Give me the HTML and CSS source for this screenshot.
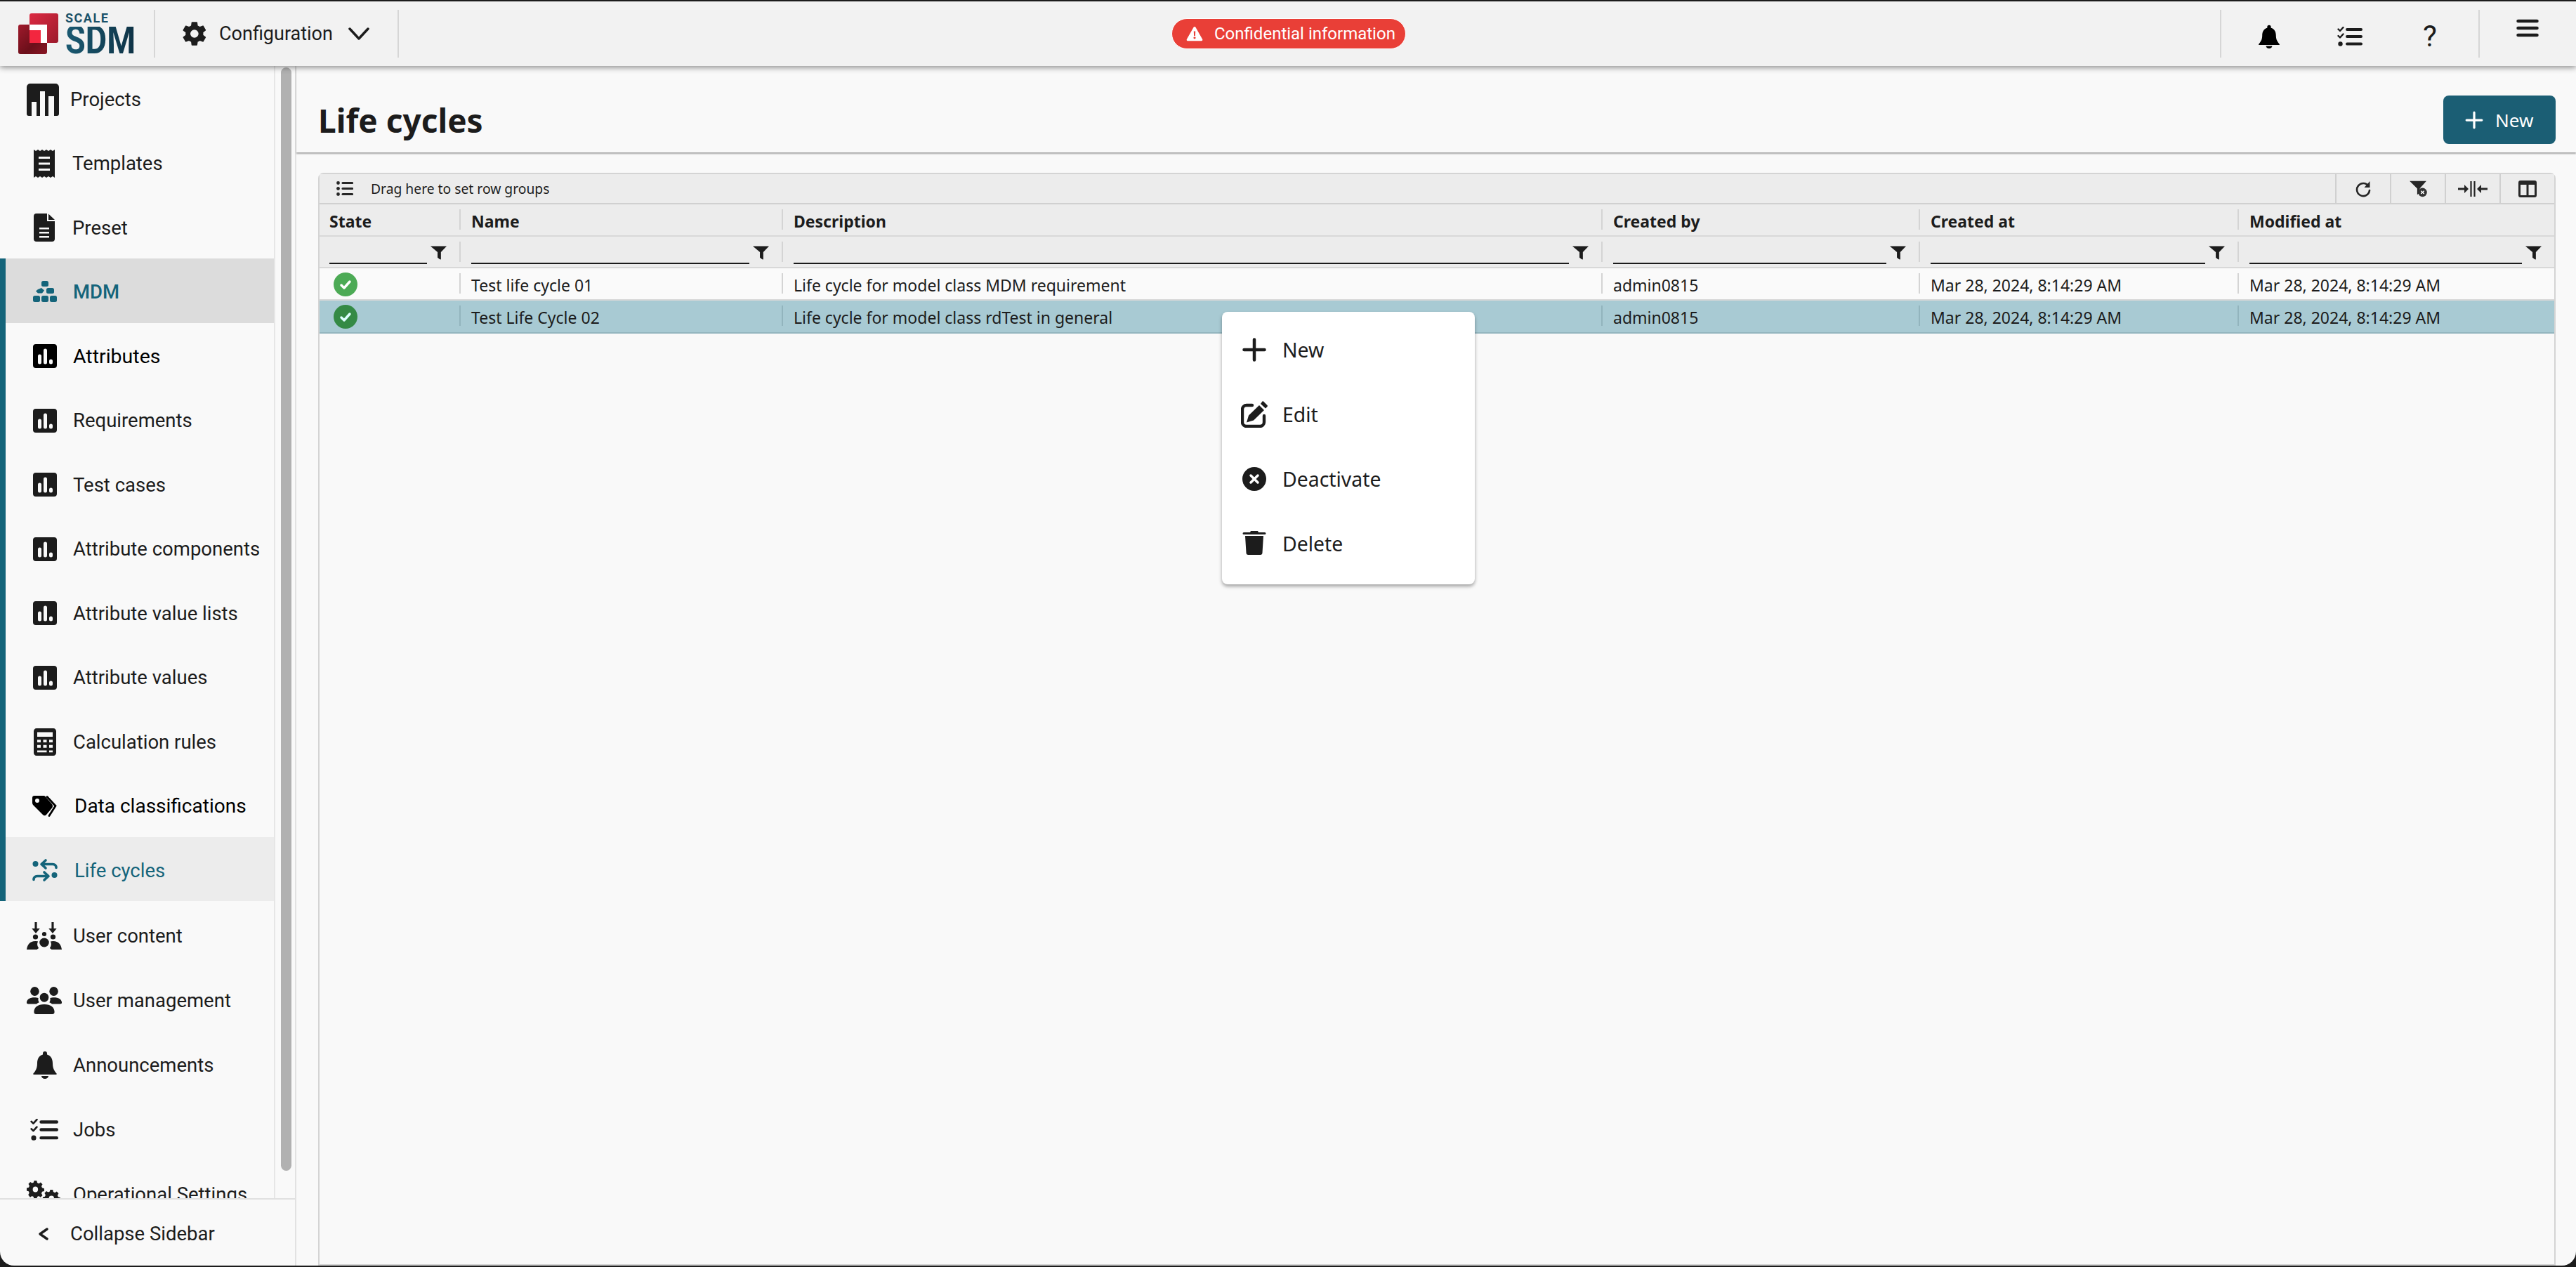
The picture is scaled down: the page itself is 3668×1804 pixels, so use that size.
FILE: index.html
```html
<!DOCTYPE html>
<html lang="en">
<head>
    <meta charset="UTF-8">
    <meta name="viewport" content="width=device-width, initial-scale=1.0">
    <title>Life cycles</title>
    <link rel="stylesheet" href="styles.css">
</head>
<body>
    <svg class="defs" width="0" height="0">
        <defs>
            <linearGradient id="logoTop" x1="0" y1="0" x2="1" y2="1">
                <stop offset="0" stop-color="#dc2a42"/>
                <stop offset="1" stop-color="#9c1a2c"/>
            </linearGradient>
            <linearGradient id="logoLow" x1="0" y1="0" x2="1" y2="1">
                <stop offset="0" stop-color="#a01a2c"/>
                <stop offset="0.6" stop-color="#6c0f1a"/>
                <stop offset="1" stop-color="#8a1624"/>
            </linearGradient>
            <symbol id="i-chart" viewBox="0 0 36 36">
                <path fill-rule="evenodd" d="M5 1h26a4 4 0 0 1 4 4v26a4 4 0 0 1-4 4H5a4 4 0 0 1-4-4V5a4 4 0 0 1 4-4zM8 18v9a2 2 0 0 0 5 0v-9a2 2 0 0 0-5 0zM16 10v17a2 2 0 0 0 5 0V10a2 2 0 0 0-5 0zM24 25v2a2.500 2.500 0 0 0 5 0v-2a2.500 2.500 0 0 0-5 0z"/>
            </symbol>
            <symbol id="i-bell" viewBox="0 0 36 40" preserveAspectRatio="none">
                <path d="M18 1a3 3 0 0 0-3 3v1.500C9.500 7 7 12 7 18c0 6-1.500 10-5.500 14.500-.6.800-.2 1.500.8 1.500h31.400c1 0 1.400-.7.800-1.500C30.500 28 29 24 29 18c0-6-2.500-11-8-12.500V4a3 3 0 0 0-3-3zM13 36h10c0 2.200-2.200 4-5 4s-5-1.800-5-4z"/>
            </symbol>
            <symbol id="i-tasks" viewBox="0 0 36 28" preserveAspectRatio="none">
                <path fill="none" stroke="currentColor" stroke-width="2.400" stroke-linecap="round" stroke-linejoin="round" d="M1.500 3.500l2.500 2.500 4.500-5M1.500 13l2.500 2.500 4.500-5"/>
                <circle cx="4.500" cy="24.500" r="3.200" fill="currentColor"/>
                <path fill="none" stroke="currentColor" stroke-width="4" stroke-linecap="round" d="M14 4h20M14 14h20M14 24.500h20"/>
            </symbol>
            <symbol id="i-filter" viewBox="0 0 24 20">
                <path d="M0 0h24l-8.500 9v10c0 1-1 1.200-2 .5l-3-2.500V9z"/>
            </symbol>
        </defs>
    </svg>

    <div class="app">
        <header class="topbar">
            <div class="logo">
                <svg class="logo-mark" viewBox="0 0 57 58">
                    <rect x="16" y="0" width="41" height="42" rx="3" fill="url(#logoTop)"/>
                    <rect x="0" y="16" width="41" height="42" rx="3" fill="url(#logoLow)"/>
                    <rect x="16" y="16" width="25" height="26" fill="#fff"/>
                    <rect x="16" y="24" width="16" height="18" fill="#f3263f"/>
                </svg>
                <div class="logo-text">
                    <span class="logo-scale">SCALE</span>
                    <span class="logo-sdm">SDM</span>
                </div>
            </div>
            <span class="bar-sep"></span>
            <div class="module">
                <svg class="module-gear" viewBox="0 0 24 24"><path fill="currentColor" d="M19.400 13c.04-.33.06-.66.06-1s-.02-.67-.06-1l2.100-1.650a.5.5 0 0 0 .12-.64l-2-3.460a.5.5 0 0 0-.61-.22l-2.490 1a7.300 7.300 0 0 0-1.730-1l-.38-2.650A.5.5 0 0 0 13.900 2h-4a.5.5 0 0 0-.49.42L9.030 5.070c-.61.25-1.180.59-1.730 1l-2.490-1a.5.5 0 0 0-.61.22l-2 3.460a.5.5 0 0 0 .12.64L4.420 11c-.04.33-.07.66-.07 1s.03.67.07 1l-2.100 1.650a.5.5 0 0 0-.12.64l2 3.460c.12.22.39.3.61.22l2.490-1c.55.42 1.120.75 1.730 1l.38 2.650c.05.24.25.42.49.42h4c.25 0 .45-.18.49-.42l.38-2.650a7.300 7.300 0 0 0 1.730-1l2.490 1c.22.08.49 0 .61-.22l2-3.460a.5.5 0 0 0-.12-.64L19.400 13zM11.900 15.500a3.500 3.500 0 1 1 0-7 3.500 3.500 0 0 1 0 7z"/></svg>
                <span class="module-name">Configuration</span>
                <svg class="module-chevron" viewBox="0 0 32 20"><path fill="none" stroke="currentColor" stroke-width="3.500" stroke-linecap="round" stroke-linejoin="round" d="M3 3l13 14L29 3"/></svg>
            </div>
            <span class="bar-sep"></span>
            <div class="bar-center">
                <div class="confidential">
                    <svg viewBox="0 0 24 22"><path fill="#fff" fill-rule="evenodd" d="M12 1c.6 0 1.100.3 1.400.8l9.800 17.300c.5 1-.2 2.200-1.400 2.200H2.200C1 21.300.3 20.100.8 19.100L10.600 1.800c.3-.5.800-.8 1.400-.8zM10.800 7.500l.3 6.500h1.800l.3-6.500zM12 15.200a1.600 1.600 0 1 0 0 3.200 1.600 1.600 0 0 0 0-3.200z"/></svg>
                    <span>Confidential information</span>
                </div>
            </div>
            <span class="bar-sep"></span>
            <div class="bar-icons">
                <svg class="bar-bell"><use href="#i-bell"/></svg>
                <svg class="bar-tasks"><use href="#i-tasks"/></svg>
                <span class="bar-help">?</span>
            </div>
            <span class="bar-sep"></span>
            <svg class="bar-menu" viewBox="0 0 32 26"><path fill="none" stroke="currentColor" stroke-width="4.500" stroke-linecap="round" d="M2.500 3h27M2.500 13h27M2.500 23h27"/></svg>
        </header>

        <div class="body-row">
            <aside class="sidebar">
                <div class="sidebar-scroll">
                    <nav class="nav">
                        <a class="nav-item nav-first">
                            <svg class="nav-icon icon-projects" viewBox="0 0 46 46"><path fill-rule="evenodd" d="M5 0h36a5 5 0 0 1 5 5v38a3 3 0 0 1-3 3h-4V18h-8v28h-5V11h-7v35h-5V26H7v20H3a3 3 0 0 1-3-3V5a5 5 0 0 1 5-5z"/></svg>
                            <span>Projects</span>
                        </a>
                        <a class="nav-item nav-narrow">
                            <svg class="nav-icon icon-doc" viewBox="0 0 30 40"><path fill-rule="evenodd" d="M0 0l3 2 3-2 3 2 3-2 3 2 3-2 3 2 3-2 3 2 3-2v40l-3-2-3 2-3-2-3 2-3-2-3 2-3-2-3 2-3-2-3 2zM7 10v3h16v-3zM7 18.500v3h16v-3zM7 27v3h16v-3z"/></svg>
                            <span>Templates</span>
                        </a>
                        <a class="nav-item nav-narrow">
                            <svg class="nav-icon icon-doc" viewBox="0 0 30 40"><path fill-rule="evenodd" d="M4 0h15v11h11v25a4 4 0 0 1-4 4H4a4 4 0 0 1-4-4V4a4 4 0 0 1 4-4zM21 .5L30 9h-9zM8 20v2.500h14V20zM8 26v2.500h14V26zM8 32v2.500h14V32z"/></svg>
                            <span>Preset</span>
                        </a>

                        <div class="nav-group">
                            <a class="nav-item is-parent">
                                <svg class="nav-icon" viewBox="0 0 36 36"><g fill="currentColor"><rect x="13" y="2" width="10" height="8" rx="2.500"/><path d="M8 14l5-2 4 3.500-3 4H8l-3-3z"/><rect x="20" y="12" width="11" height="8" rx="2.500"/><rect x="1" y="23" width="10" height="9" rx="2.500"/><rect x="13" y="23" width="10" height="9" rx="2.500"/><rect x="25" y="23" width="10" height="9" rx="2.500"/></g></svg>
                                <span>MDM</span>
                            </a>
                            <a class="nav-item strong nav-attr"><svg class="nav-icon"><use href="#i-chart"/></svg><span>Attributes</span></a>
                            <a class="nav-item"><svg class="nav-icon"><use href="#i-chart"/></svg><span>Requirements</span></a>
                            <a class="nav-item"><svg class="nav-icon"><use href="#i-chart"/></svg><span>Test cases</span></a>
                            <a class="nav-item"><svg class="nav-icon"><use href="#i-chart"/></svg><span>Attribute components</span></a>
                            <a class="nav-item"><svg class="nav-icon"><use href="#i-chart"/></svg><span>Attribute value lists</span></a>
                            <a class="nav-item"><svg class="nav-icon"><use href="#i-chart"/></svg><span>Attribute values</span></a>
                            <a class="nav-item">
                                <svg class="nav-icon icon-calc" viewBox="2 0 32 36" preserveAspectRatio="none"><path fill-rule="evenodd" d="M6 0h24a4 4 0 0 1 4 4v28a4 4 0 0 1-4 4H6a4 4 0 0 1-4-4V4a4 4 0 0 1 4-4zM7 5v6h22V5zM7 15v3.500h5V15zM15.500 15v3.500h5V15zM24 15v3.500h5V15zM7 22v3.500h5V22zM15.500 22v3.500h5V22zM24 22v3.500h5V22zM7 29v2.500h13.500V29zM24 29v2.500h5V29z"/></svg>
                                <span>Calculation rules</span>
                            </a>
                            <a class="nav-item strong nav-class">
                                <svg class="nav-icon" viewBox="0 0 36 30"><path fill-rule="evenodd" d="M3 0h13c1 0 2 .5 2.700 1.200L28 12c1.400 1.500 1.400 4 0 5.500L20 27c-1.400 1.600-3.600 1.600-5 0L1 13C.3 12.200 0 11 0 10V3a3 3 0 0 1 3-3zM7 4a3 3 0 1 0 0 6 3 3 0 0 0 0-6z"/><path fill="none" stroke="currentColor" stroke-width="2.800" stroke-linecap="round" d="M21 1.500l12 13-9 14"/></svg>
                                <span>Data classifications</span>
                            </a>
                            <a class="nav-item is-active nav-class">
                                <svg class="nav-icon" viewBox="0 0 36 32"><g fill="currentColor"><circle cx="4.500" cy="7" r="4"/><circle cx="31.500" cy="23" r="4"/></g><path fill="none" stroke="currentColor" stroke-width="3.600" stroke-linecap="round" stroke-linejoin="round" d="M19 2l-6 5.500 6 5.500M14 7.500h15c3 0 5 2 5 5M17 19l6 5.500-6 5.500M22 24.500H7c-3 0-5 2-5 5"/></svg>
                                <span>Life cycles</span>
                            </a>
                        </div>

                        <a class="nav-item nav-wide nav-low">
                            <svg class="nav-icon" viewBox="0 0 48 39" preserveAspectRatio="none"><g fill="currentColor"><path d="M11 0h3v9h4l-5.500 7L7 9h4zM34 0h3v9h4l-5.500 7L30 9h4z"/><circle cx="12" cy="21" r="3.500"/><circle cx="36" cy="21" r="3.500"/><circle cx="24" cy="17" r="3"/><circle cx="24" cy="29" r="6.500"/><path d="M0 39c1-7 4-12 12-12 1.500 0 2.500.2 3.500.6-.5 1-1 2.400-1 4 0 2 1 4 2 5.400-1 .6-2 1.200-2.500 2zM48 39c-1-7-4-12-12-12-1.500 0-2.500.2-3.500.6.5 1 1 2.400 1 4 0 2-1 4-2 5.400 1 .6 2 1.200 2.500 2z"/></g></svg>
                            <span>User content</span>
                        </a>
                        <a class="nav-item nav-wide nav-low">
                            <svg class="nav-icon" viewBox="0 0 48 36" preserveAspectRatio="none"><g fill="currentColor"><circle cx="11" cy="6" r="6"/><circle cx="37" cy="6" r="6"/><circle cx="24" cy="14" r="6"/><path d="M0 20c1-4 4-6 11-6 2 0 3 .2 5 .8-.6 2.200 0 4.200 1 5.700-1.500.5-2.500 1-3.500 2H2c-1.500 0-2.500-1-2-2.500zM48 20c-1-4-4-6-11-6-2 0-3 .2-5 .8.6 2.200 0 4.200-1 5.700 1.500.5 2.500 1 3.500 2H46c1.500 0 2.500-1 2-2.500zM10 33c0-6 5-10 14-10s14 4 14 10c0 2-1 3-3 3H13c-2 0-3-1-3-3z"/></g></svg>
                            <span>User management</span>
                        </a>
                        <a class="nav-item nav-bell nav-low">
                            <svg class="nav-icon icon-bell"><use href="#i-bell"/></svg>
                            <span>Announcements</span>
                        </a>
                        <a class="nav-item nav-jobs nav-low">
                            <svg class="nav-icon icon-tasks"><use href="#i-tasks"/></svg>
                            <span>Jobs</span>
                        </a>
                        <a class="nav-item nav-wide nav-low">
                            <svg class="nav-icon" viewBox="0 0 48 36" preserveAspectRatio="none"><g fill="currentColor"><path fill-rule="evenodd" d="M14 0h5l1 4 3 1.300 3.500-2 3.500 3.500-2 3.500 1.300 3 4 1v5l-4 1-1.300 3 2 3.500-3.500 3.500-3.500-2-3 1.300-1 4h-5l-1-4-3-1.300-3.500 2L3 26l2-3.500-1.300-3-3.700-1v-5l4-1 1.300-3-2-3.500 3.500-3.500 3.500 2 3-1.300zM16.500 11a5 5 0 1 0 0 10 5 5 0 0 0 0-10z" transform="scale(.72)"/><path fill-rule="evenodd" d="M14 0h5l1 4 3 1.300 3.500-2 3.500 3.500-2 3.500 1.300 3 4 1v5l-4 1-1.300 3 2 3.500-3.500 3.500-3.500-2-3 1.300-1 4h-5l-1-4-3-1.300-3.500 2L3 26l2-3.500-1.300-3-3.700-1v-5l4-1 1.300-3-2-3.500 3.500-3.500 3.500 2 3-1.300zM16.500 11a5 5 0 1 0 0 10 5 5 0 0 0 0-10z" transform="translate(22 12) scale(.72)"/></g></svg>
                            <span>Operational Settings</span>
                        </a>
                    </nav>
                    <div class="scrollbar"><div class="scrollbar-thumb"></div></div>
                </div>
                <div class="collapse">
                    <svg viewBox="0 0 16 20"><path fill="none" stroke="currentColor" stroke-width="3.500" stroke-linecap="round" stroke-linejoin="round" d="M13 3L3 10l10 7"/></svg>
                    <span>Collapse Sidebar</span>
                </div>
            </aside>

            <main class="content">
                <div class="page-head">
                    <h1>Life cycles</h1>
                    <button class="btn-new">
                        <svg viewBox="0 0 24 24"><path fill="none" stroke="currentColor" stroke-width="3" stroke-linecap="round" d="M12 2v20M2 12h20"/></svg>
                        <span>New</span>
                    </button>
                </div>

                <div class="grid">
                    <div class="grid-tools">
                        <svg class="group-icon" viewBox="0 0 24 21"><g fill="currentColor"><circle cx="2.500" cy="2.500" r="2.400"/><circle cx="2.500" cy="10.500" r="2.400"/><circle cx="2.500" cy="18.500" r="2.400"/></g><path fill="none" stroke="currentColor" stroke-width="3.200" stroke-linecap="round" d="M9 2.500h13.500M9 10.500h13.500M9 18.500h13.500"/></svg>
                        <span class="group-label">Drag here to set row groups</span>
                        <div class="tool-btn"><svg viewBox="0 0 24 24"><path fill="none" stroke="currentColor" stroke-width="2.600" stroke-linecap="round" d="M19.500 8A9 9 0 1 0 21 14"/><path fill="currentColor" d="M21.500 1v9h-8z"/></svg></div>
                        <div class="tool-btn"><svg viewBox="0 0 24 21"><path fill="currentColor" d="M1 0h22l-8 9-1 2c-1 1.500-1 3-.500 5L11 18V10z"/><circle cx="18" cy="15" r="5.800" fill="#333"/><path stroke="#fff" stroke-width="1.400" d="M16 13l4 4M20 13l-4 4"/></svg></div>
                        <div class="tool-btn"><svg class="tool-wide" viewBox="0 0 42 22"><path fill="currentColor" d="M0 9.500h9V5l6 6-6 6v-4.500H0zM42 9.500h-9V5l-6 6 6 6v-4.500h9z"/><path stroke="currentColor" stroke-width="2.200" d="M18.500 0v22M23.500 0v22"/></svg></div>
                        <div class="tool-btn"><svg viewBox="0 0 26 24"><path fill="currentColor" fill-rule="evenodd" d="M3 0h20a3 3 0 0 1 3 3v18a3 3 0 0 1-3 3H3a3 3 0 0 1-3-3V3a3 3 0 0 1 3-3zM3 6v15h8.500V6zM14.500 6v15H23V6z"/></svg></div>
                    </div>

                    <div class="grid-row grid-head">
                        <div class="cell">State</div>
                        <div class="cell">Name</div>
                        <div class="cell">Description</div>
                        <div class="cell">Created by</div>
                        <div class="cell">Created at</div>
                        <div class="cell">Modified at</div>
                    </div>

                    <div class="grid-row grid-filter">
                        <div class="cell"><span class="filter-input"></span><svg class="filter-icon"><use href="#i-filter"/></svg></div>
                        <div class="cell"><span class="filter-input"></span><svg class="filter-icon"><use href="#i-filter"/></svg></div>
                        <div class="cell"><span class="filter-input"></span><svg class="filter-icon"><use href="#i-filter"/></svg></div>
                        <div class="cell"><span class="filter-input"></span><svg class="filter-icon"><use href="#i-filter"/></svg></div>
                        <div class="cell"><span class="filter-input"></span><svg class="filter-icon"><use href="#i-filter"/></svg></div>
                        <div class="cell"><span class="filter-input"></span><svg class="filter-icon"><use href="#i-filter"/></svg></div>
                    </div>

                    <div class="grid-row grid-data">
                        <div class="cell"><svg class="state-ok" viewBox="0 0 34 34"><circle cx="17" cy="17" r="17" fill="#4caa55"/><path fill="none" stroke="#fff" stroke-width="3.500" stroke-linecap="round" stroke-linejoin="round" d="M11 18l4 4 8-9"/></svg></div>
                        <div class="cell">Test life cycle 01</div>
                        <div class="cell">Life cycle for model class MDM requirement</div>
                        <div class="cell">admin0815</div>
                        <div class="cell">Mar 28, 2024, 8:14:29 AM</div>
                        <div class="cell">Mar 28, 2024, 8:14:29 AM</div>
                    </div>
                    <div class="grid-row grid-data is-selected">
                        <div class="cell"><svg class="state-ok" viewBox="0 0 34 34"><circle cx="17" cy="17" r="17" fill="#348a45"/><path fill="none" stroke="#dff" stroke-width="3.500" stroke-linecap="round" stroke-linejoin="round" d="M11 18l4 4 8-9"/></svg></div>
                        <div class="cell">Test Life Cycle 02</div>
                        <div class="cell">Life cycle for model class rdTest in general</div>
                        <div class="cell">admin0815</div>
                        <div class="cell">Mar 28, 2024, 8:14:29 AM</div>
                        <div class="cell">Mar 28, 2024, 8:14:29 AM</div>
                    </div>
                </div>
            </main>
        </div>

        <!-- right click menu -->
        <div class="context-menu">
            <div class="menu-item">
                <svg viewBox="-2 -2 38 38"><path fill="none" stroke="currentColor" stroke-width="4.500" stroke-linecap="round" d="M17 2.500v29M2.500 17h29"/></svg>
                <span>New</span>
            </div>
            <div class="menu-item">
                <svg viewBox="0 0 38 38"><path fill="none" stroke="currentColor" stroke-width="4.400" stroke-linecap="round" d="M16 6H8a6 6 0 0 0-6 6v18a6 6 0 0 0 6 6h19a6 6 0 0 0 6-6v-9"/><path fill="currentColor" d="M32 .5l5.500 5.500c.5.700.5 1.500 0 2l-2.500 2.500L28 4l2.500-3.500c.5-.5 1-.5 1.500 0zM26 6l7 7-15 14.500-10 3 3-10z"/></svg>
                <span>Edit</span>
            </div>
            <div class="menu-item">
                <svg viewBox="-2 -2 38 38"><circle cx="17" cy="17" r="17" fill="currentColor"/><path stroke="#fff" stroke-width="3.500" stroke-linecap="round" d="M12 12l10 10M22 12L12 22"/></svg>
                <span>Deactivate</span>
            </div>
            <div class="menu-item">
                <svg viewBox="-2 -1 38 38"><path fill="currentColor" d="M12 0h10l1 2h9a1.500 1.500 0 0 1 0 3H2a1.500 1.500 0 0 1 0-3h9zM4 7h26l-1.500 24a3 3 0 0 1-3 3h-17a3 3 0 0 1-3-3z"/></svg>
                <span>Delete</span>
            </div>
        </div>
    </div>
</body>
</html>
```

FILE: styles.css
```css
* {
    box-sizing: border-box;
    padding: 0;
    margin: 0;
}

html,
body {
    height: 100%;
    overflow: hidden;
    background-color: #1c1c1c;
}

.defs {
    position: absolute;
}

.app {
    position: relative;
    display: flex;
    flex-direction: column;
    height: 1800px;
    margin-top: 2px;
    overflow: hidden;
    background-color: #f9f9f9;
    border-radius: 0 0 20px 20px;
    color: #1c1c1c;
    font-family: "Roboto", sans-serif;
}

/* top bar */
.topbar {
    position: relative;
    z-index: 2;
    display: flex;
    align-items: center;
    flex: none;
    height: 92px;
    padding: 0 53px 0 26px;
    background-color: #f2f2f2;
    box-shadow: 0 2px 8px rgba(0, 0, 0, 0.45);
}

.logo {
    display: flex;
    gap: 10px;
    width: 166px;
}

.logo-mark {
    width: 57px;
    height: 58px;
    flex: none;
}

.logo-text {
    display: flex;
    flex-direction: column;
    gap: 5px;
    color: #1a5168;
    font-weight: 700;
}

.logo-scale {
    font-size: 18px;
    line-height: 14px;
    letter-spacing: 1.5px;
}

.logo-sdm {
    width: 117px;
    font-size: 55px;
    line-height: 39px;
    background: linear-gradient(90deg, #1a5a72, #0f3346);
    -webkit-background-clip: text;
    background-clip: text;
    color: transparent;
    transform: scaleX(0.85);
    transform-origin: left;
}

.bar-sep {
    flex: none;
    width: 2px;
    height: 68px;
    background-color: #d6d6d6;
}

.logo + .bar-sep {
    margin-left: 27px;
}

.module {
    display: flex;
    align-items: center;
    flex: none;
    width: 345px;
    padding-left: 36px;
    font-size: 27px;
}

.module-gear {
    width: 40px;
    height: 40px;
    margin-right: 15px;
    flex: none;
}

.module-chevron {
    width: 32px;
    height: 20px;
    margin-left: 21px;
}

.bar-center {
    display: flex;
    flex: 1;
    padding-left: 1100px;
}

.confidential {
    display: flex;
    align-items: center;
    gap: 16px;
    width: 334px;
    height: 44px;
    padding-left: 20px;
    background-color: #e93f37;
    border: 1px solid #fff;
    border-radius: 22px;
    color: #fff;
    font-size: 24px;
    white-space: nowrap;
}

.confidential svg {
    width: 24px;
    height: 22px;
}

.bar-icons {
    display: flex;
    align-items: center;
    flex: none;
    width: 366px;
    margin-top: 8px;
    padding-left: 52px;
}

.bar-bell {
    width: 32px;
    height: 34px;
}

.bar-tasks {
    width: 36px;
    height: 28px;
    margin-left: 81px;
}

.bar-help {
    margin-left: 86px;
    font-size: 42px;
    line-height: 1;
}

.bar-menu {
    flex: none;
    width: 32px;
    height: 26px;
    margin: -16px 0 0 52px;
}

.body-row {
    display: flex;
    flex: 1;
    min-height: 0;
}

/* sidebar */
.sidebar {
    display: flex;
    flex-direction: column;
    flex: none;
    width: 422px;
    border-right: 2px solid #e2e2e2;
}

.sidebar-scroll {
    display: flex;
    flex: 1;
    min-height: 0;
    overflow: hidden;
}

.nav {
    flex: none;
    width: 392px;
    height: 100%;
    border-right: 2px solid #e6e6e6;
    overflow: hidden;
}

.nav-item {
    display: flex;
    align-items: center;
    height: 91.500px;
    padding-top: 4px;
    padding-left: 46px;
    font-size: 27.500px;
    white-space: nowrap;
}

.nav-item span {
    margin-left: 24px;
}

.nav-icon {
    flex: none;
    width: 36px;
    height: 36px;
    fill: currentColor;
}

.nav-first {
    height: 91px;
    padding-left: 38px;
}

.nav-first span {
    margin-left: 16px;
}

.icon-projects {
    width: 46px;
    height: 46px;
}

.nav-narrow {
    padding-left: 48px;
}

.nav-narrow span {
    margin-left: 25px;
}

.icon-doc {
    width: 30px;
    height: 40px;
}

.nav-group {
    border-left: 8px solid #14647a;
}

.nav-group .nav-item {
    padding-left: 38px;
}

.nav-group .nav-item span {
    margin-left: 22px;
}

.nav-group .nav-class span {
    margin-left: 24px;
}

.nav-group .nav-attr {
    font-size: 28.500px;
}

.nav-group .nav-class {
    font-size: 28px;
}

.nav-group .is-active {
    font-size: 27.500px;
}

.nav-group .icon-calc {
    width: 32px;
    height: 39px;
    margin: 0 2px;
}

.is-parent {
    background-color: #dcdcdc;
    color: #14647a;
}

.is-parent span {
    font-weight: 500;
}

.strong {
    color: #000;
}

.is-active {
    background-color: #ececec;
    color: #14647a;
}

.nav-low {
    height: 92px;
    padding-top: 6px;
}

.nav-wide {
    padding-left: 38px;
}

.nav-wide .nav-icon {
    width: 50px;
    height: 39px;
}

.nav-wide span {
    margin-left: 16px;
}

.nav-bell .icon-bell {
    width: 36px;
    height: 40px;
}

.nav-bell span {
    margin-left: 22px;
}

.nav-jobs {
    padding-left: 43px;
}

.nav-jobs .icon-tasks {
    width: 40px;
    height: 31px;
}

.nav-jobs span {
    margin-left: 21px;
}

.scrollbar {
    flex: none;
    width: 28px;
    padding: 2px 6px 0 8px;
}

.scrollbar-thumb {
    width: 15px;
    height: 1571px;
    background-color: #b1b1b1;
    border-radius: 8px;
}

.collapse {
    display: flex;
    align-items: center;
    flex: none;
    height: 96px;
    padding-top: 3px;
    padding-left: 54px;
    border-top: 2px solid #e0e0e0;
    font-size: 27.500px;
}

.collapse svg {
    width: 16px;
    height: 20px;
    margin-right: 30px;
}

/* main */
.content {
    display: flex;
    flex-direction: column;
    flex: 1;
    min-width: 0;
    font-family: "Noto Sans", sans-serif;
}

.page-head {
    display: flex;
    align-items: center;
    justify-content: space-between;
    flex: none;
    height: 123px;
    padding: 30px 29px 0 31px;
    box-shadow: 0 2px 2px rgba(0, 0, 0, 0.35);
}

h1 {
    font-size: 46px;
    font-weight: 700;
}

.btn-new {
    display: flex;
    align-items: center;
    width: 160px;
    height: 69px;
    padding-left: 31px;
    background-color: #1b5e74;
    border: none;
    border-radius: 8px;
    color: #fff;
    font-family: "Noto Sans", sans-serif;
    font-size: 26px;
}

.btn-new svg {
    width: 26px;
    height: 26px;
    margin-right: 17px;
}

.grid {
    display: flex;
    flex-direction: column;
    flex: 1;
    margin: 29px 29px 0 31px;
    background-color: #f9f9f9;
    border: 2px solid #d4d4d4;
    border-radius: 8px 8px 0 0;
    font-size: 23px;
}

.grid-tools {
    display: flex;
    align-items: center;
    flex: none;
    height: 43px;
    padding-left: 24px;
    background-color: #ececec;
    border-bottom: 2px solid #d0d0d0;
}

.group-icon {
    display: block;
    width: 24px;
    height: 21px;
    color: #262626;
}

.group-label {
    flex: 1;
    margin-left: 25px;
    font-size: 19.300px;
}

.tool-btn {
    display: flex;
    align-items: center;
    justify-content: center;
    width: 78px;
    height: 100%;
    border-left: 2px solid #d0d0d0;
    color: #262626;
}

.tool-btn svg {
    width: 26px;
    height: 24px;
}

.tool-btn .tool-wide {
    width: 42px;
    height: 22px;
}

.grid-row {
    display: grid;
    grid-template-columns: 199px 459px 1167px 452px 454px 1fr;
    flex: none;
    height: 46px;
    border-bottom: 2px solid #d8d8d8;
}

.grid-head,
.grid-filter {
    background-color: #ececec;
}

.grid-head {
    font-weight: 700;
}

.grid-filter {
    height: 45px;
}

.cell {
    position: relative;
    display: flex;
    align-items: center;
    min-width: 0;
    padding-top: 3px;
    padding-left: 14px;
    white-space: nowrap;
}

.cell + .cell {
    padding-left: 17px;
}

.cell + .cell::before {
    content: "";
    position: absolute;
    top: 7px;
    left: 0;
    width: 2px;
    height: 29px;
    background-color: #d4d4d4;
}

.filter-input {
    flex: 1;
    height: 29px;
    margin-top: 3px;
    border-bottom: 2px solid #1c1c1c;
}

.filter-icon {
    flex: none;
    width: 23px;
    height: 20px;
    margin: 0 18px 0 5px;
    fill: #1c1c1c;
}

.state-ok {
    width: 34px;
    height: 34px;
    margin-left: 6px;
    margin-top: -2px;
}

.grid-data {
    background-color: #fafafa;
}

.grid-data.is-selected {
    height: 47px;
    background-color: #a8cad3;
    border-bottom-color: #93b5bf;
}

.is-selected .cell::before {
    background-color: #92b4bd;
}

/* context menu */
.context-menu {
    position: absolute;
    z-index: 3;
    top: 442px;
    left: 1740px;
    width: 360px;
    height: 388px;
    padding-top: 8px;
    background-color: #fff;
    border-radius: 8px;
    box-shadow: 0 3px 5px rgba(0, 0, 0, 0.35);
    font-family: "Noto Sans", sans-serif;
    font-size: 28.400px;
}

.menu-item {
    display: flex;
    align-items: center;
    height: 92px;
    padding-left: 27px;
}

.menu-item svg {
    flex: none;
    width: 38px;
    height: 38px;
    margin-right: 21px;
}
```
